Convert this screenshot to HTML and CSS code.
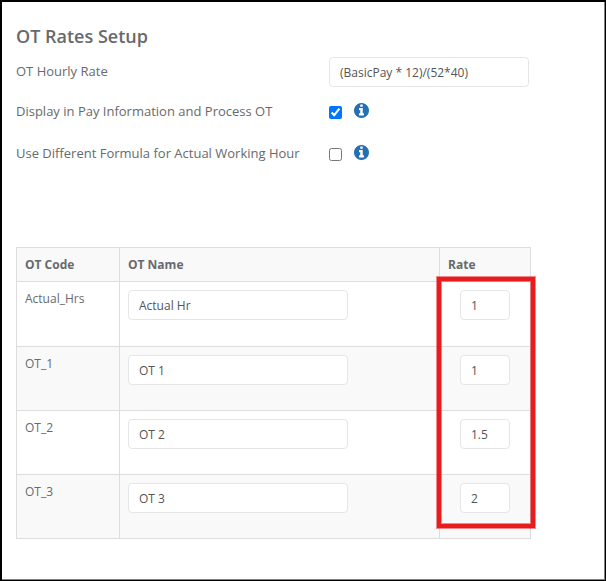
FILE: index.html
```html
<!DOCTYPE html>
<html lang="en">
<head>
<meta charset="utf-8">
<meta name="viewport" content="width=device-width, initial-scale=1">
<title>OT Rates Setup</title>
<link rel="stylesheet" href="styles.css">
</head>
<body>
<svg class="sprite" aria-hidden="true">
  <symbol id="info" viewBox="128 128 1536 1536">
    <path d="M1152 1376v-160q0-14-9-23t-23-9h-96v-512q0-14-9-23t-23-9h-320q-14 0-23 9t-9 23v160q0 14 9 23t23 9h96v320h-96q-14 0-23 9t-9 23v160q0 14 9 23t23 9h448q14 0 23-9t9-23zM1024 480v-160q0-14-9-23t-23-9h-192q-14 0-23 9t-9 23v160q0 14 9 23t23 9h192q14 0 23-9t9-23zM1664 896q0 209-103 385.500t-279.500 279.500-385.500 103-385.500-103-279.500-279.500-103-385.500 103-385.500 279.500-279.500 385.500-103 385.500 103 279.500 279.500 103 385.500z"/>
  </symbol>
</svg>
<main class="page">
  <h1 class="title">OT Rates Setup</h1>
  <form class="form">
    <div class="field">
      <label class="label" for="hourly">OT Hourly Rate</label>
      <input class="input input-formula" id="hourly" type="text" value="(BasicPay * 12)/(52*40)">
    </div>
    <div class="field field-check">
      <label class="label" for="display">Display in Pay Information and Process OT</label>
      <span class="check-group">
        <input class="check" id="display" type="checkbox" checked>
        <svg class="info"><use href="#info"/></svg>
      </span>
    </div>
    <div class="field field-check">
      <label class="label" for="different">Use Different Formula for Actual Working Hour</label>
      <span class="check-group">
        <input class="check" id="different" type="checkbox">
        <svg class="info"><use href="#info"/></svg>
      </span>
    </div>
  </form>
  <div class="table-wrap">
    <table class="rates">
      <thead>
        <tr><th class="col-code" id="code">OT Code</th><th id="name">OT Name</th><th class="col-rate" id="rate">Rate</th></tr>
      </thead>
      <tbody>
        <tr>
          <td>Actual_Hrs</td>
          <td><input class="input input-name" type="text" aria-labelledby="name" value="Actual Hr"></td>
          <td><input class="input input-rate" type="text" aria-labelledby="rate" value="1"></td>
        </tr>
        <tr>
          <td>OT_1</td>
          <td><input class="input input-name" type="text" aria-labelledby="name" value="OT 1"></td>
          <td><input class="input input-rate" type="text" aria-labelledby="rate" value="1"></td>
        </tr>
        <tr>
          <td>OT_2</td>
          <td><input class="input input-name" type="text" aria-labelledby="name" value="OT 2"></td>
          <td><input class="input input-rate" type="text" aria-labelledby="rate" value="1.5"></td>
        </tr>
        <tr>
          <td>OT_3</td>
          <td><input class="input input-name" type="text" aria-labelledby="name" value="OT 3"></td>
          <td><input class="input input-rate" type="text" aria-labelledby="rate" value="2"></td>
        </tr>
      </tbody>
    </table>
    <div class="highlight"></div>
  </div>
</main>
</body>
</html>
```
FILE: styles.css
```css
* {
  box-sizing: border-box;
}

body {
  margin: 0;
  background: #fff;
  color: #676a6c;
  font-family: "Open Sans", sans-serif;
  font-size: 13px;
  line-height: 18px;
}

.sprite {
  display: none;
}

.page {
  min-height: 100vh;
  padding: 22px 14px;
  border: solid #000;
  border-width: 2px 1px 1px 2px;
  box-shadow: inset -1px -1px #808080;
}

.title {
  margin: 0 0 9px;
  font-size: 18px;
  font-weight: 600;
  line-height: 24px;
}

.form {
  display: flex;
  flex-direction: column;
  gap: 10px;
  margin-bottom: 76px;
}

.field {
  display: grid;
  grid-template-columns: 313px 1fr;
  align-items: start;
}

.field-check {
  min-height: 32px;
}

.label {
  padding-top: 5px;
}

.input {
  display: block;
  height: 30px;
  padding: 0 10px;
  border: 1px solid #e5e6e7;
  border-radius: 4px;
  background: #fff;
  color: #555;
  font: inherit;
  font-size: 12px;
}

.input-formula {
  width: 200px;
}

.check-group {
  display: flex;
  align-items: flex-start;
  gap: 12px;
  padding-top: 6px;
}

.check {
  width: 13px;
  height: 13px;
  margin: 3px 0 0;
}

.info {
  width: 15px;
  height: 15px;
  fill: #2470b3;
}

.table-wrap {
  position: relative;
  max-width: 515px;
}

.rates {
  width: 100%;
  table-layout: fixed;
  border-collapse: collapse;
  font-size: 12px;
  line-height: 17px;
}

.rates th,
.rates td {
  padding: 8px;
  border: 1px solid #ddd;
  text-align: left;
  vertical-align: top;
}

.rates th {
  background: #f9f9f9;
  font-weight: 700;
}

.rates td {
  height: 64px;
}

.rates tr:first-child td {
  height: 65px;
}

.rates tr:nth-child(even) td {
  background: #f9f9f9;
}

.rates .col-code {
  width: 103px;
}

.rates .col-rate {
  width: 91px;
}

.input-name {
  width: 220px;
}

.input-rate {
  width: 50px;
  margin-left: 12px;
}

/* Marks the editable rate cells */
.highlight {
  position: absolute;
  top: 30px;
  right: -4px;
  bottom: 11px;
  width: 98px;
  border: 4px solid #e81c1c;
  box-shadow: 0 0 0 1px #e81c1c80, inset 0 0 0 1px #e81c1c80;
  pointer-events: none;
}
```
